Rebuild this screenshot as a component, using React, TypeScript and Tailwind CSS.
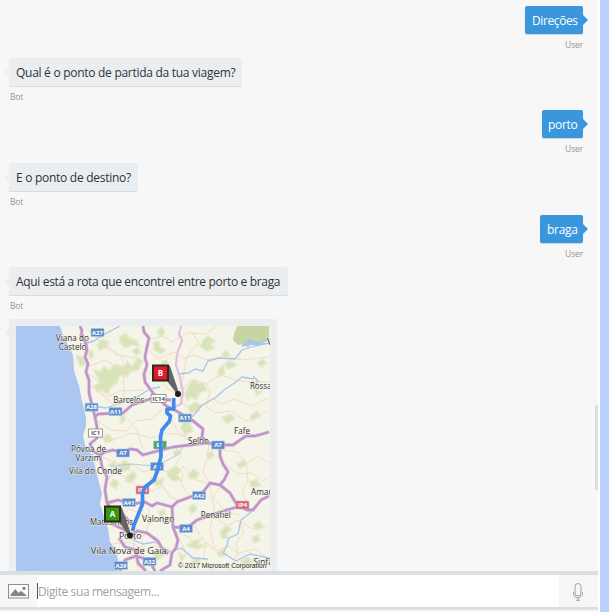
import React from 'react';

const FONT = "font-['Open_Sans','Noto_Sans',sans-serif]";

function UserMessage({ text, box, tracking }: { text: string; box: string; tracking: string }) {
  return (
    <div className="flex h-[104.4px] flex-col items-end pr-[15px]">
      <div className={`relative flex h-7 shrink-0 items-center rounded-[2px] bg-[#3a96dd] pt-[2px] shadow-[0_1px_1px_#c8d4dd] ${box}`}>
        <span className={`text-[12px] leading-7 whitespace-nowrap text-white ${tracking}`}>{text}</span>
        <span className="absolute top-[9px] -right-[5px] border-y-[5px] border-l-[5px] border-y-transparent border-l-[#3a96dd]" />
      </div>
      <div className="mt-1 h-[14px] text-[8.5px] leading-[14px] tracking-[-0.15px] text-[#969696]">User</div>
    </div>
  );
}

function BotMessage({ text, box, tracking }: { text: string; box: string; tracking: string }) {
  return (
    <div className="flex flex-col items-start pl-[9px]">
      <div className={`relative flex h-7 items-center rounded-[2px] bg-[#ebeef1] pt-[2px] pl-[7px] shadow-[0_1px_0_#d9dcdf] ${box}`}>
        <span className={`text-[12px] leading-7 whitespace-nowrap text-[#303236] ${tracking}`}>{text}</span>
        <BotTail />
      </div>
      <div className="mt-1 ml-px h-[14px] text-[8.5px] leading-[14px] tracking-[-0.15px] text-[#969696]">Bot</div>
    </div>
  );
}

function BotTail() {
  return <span className="absolute top-[10px] -left-[4px] border-y-[4px] border-r-[4px] border-y-transparent border-r-[#ebeef1]" />;
}

const highways = [
  'M80 326L82 331 81 336 86 343 87 350 85 357 88 364 86 372 89 380 89 393 92 405 95 417 97 427 97 438 90 444 94 452 100 455 102 467 107 477 105 490 107 503 112 510 123 515 132 524',
  'M143 326L144 332 149 338 147 347 145 357 147 365 144 374 145 382 153 393 165 405 180 413 192 420 203 429 202 437 207 443',
  'M95 417L98 414 123 413 132 405 150 399 171 400',
  'M100 455L105 452 113 450 122 453 130 449 137 450 143 455 150 453 173 447 207 443 220 445 233 445 240 440 246 436 255 436 269 432',
  'M220 448L220 456 223 464 228 472 224 480 220 485 210 483 203 492 190 497 177 502 172 507 165 505 157 503 152 506 145 502 132 504 118 500 107 503',
  'M220 485L230 493 237 505 247 510 253 510 261 500 269 496',
  'M237 507L217 513 197 520 187 528 173 527',
  'M172 505L173 527 178 540 176 548 172 553 170 565 160 571',
  'M112 524L123 529 130 535 138 531 147 533 158 541 163 550 168 554',
  'M119 538L125 547 136 550 138 563 146 571M120 571L125 560 136 556 149 560 155 571',
];

const minorRoads = [
  'M84 326L103 345 117 355 137 358 143 362M104 326L97 339 111 349 123 358 124 397 115 413',
  'M87 367L105 360 121 370 140 369M89 385L108 397 119 391 144 390M89 374L99 381 100 393 116 407',
  'M149 350L158 359 174 352 184 359 194 355 207 360 225 356 242 360 269 357',
  'M146 371L160 379 168 389 178 394 191 380 207 384 220 374 237 381 269 382',
  'M150 339L164 336 172 342 188 333 205 334 217 326M191 331L199 343 191 351 186 360 183 378 178 394',
  'M178 394L184 405 198 410 212 398 222 404 235 399 251 406 269 398',
  'M207 384L210 391 206 407 216 413 231 411 246 421 269 411',
  'M164 408L151 419 136 421 127 431 110 430 97 420M125 415L137 431 143 449M171 418L177 430 186 439 199 443',
  'M98 438L115 439 132 433 151 438 166 433 183 435 201 444',
  'M103 457L120 465 132 464 143 472 157 467 171 474 184 467 196 480 209 484',
  'M106 480L115 473 128 478 137 485 152 491 163 486 170 497 182 501',
  'M175 446L181 456 175 466 183 472 181 484 190 497M209 444L207 458 203 472 210 484 214 509 210 530 215 550',
  'M222 450L238 452 246 464 258 456 269 463M224 464L238 474 252 473 263 481 269 477M246 464L248 480 242 492 249 506',
  'M107 515L120 518 129 509 143 514 149 523 164 518 173 524M149 505L149 524 142 540 145 571',
  'M175 531L189 537 195 547 207 543 216 551 228 546 238 553 256 549 269 560',
  'M180 539L186 553 180 565 195 569M192 522L200 535 207 543 203 557 214 571M211 514L227 526 238 520 253 529 269 526',
  'M238 520L244 532 236 543 238 553 230 571M222 485L213 497 226 512 240 515',
  'M110 522L123 530 131 526 142 532M113 544L130 542 144 550 154 546 171 550M135 536L133 551 139 571',
];

const woods = [
  'M97 345L102 339 109 342 106 348 99 350ZM119 338L125 333 129 338 136 340 140 346 132 345 126 348 121 344ZM76 355L83 357 86 365 80 366Z',
  'M94 370L100 372 104 366 109 370 115 364 124 367 127 361 132 366 138 358 143 361 138 370 130 372 127 377 120 375 117 383 110 388 108 394 101 390 97 392 94 386 100 382Z',
  'M88 352L92 350 94 356 90 359ZM121 416L124 413 125 421 120 424ZM103 437L109 434 113 441 105 443ZM132 351L137 347 141 352 136 355Z',
  'M157 331L162 327 165 333 160 337ZM153 343L159 341 160 347 166 350 161 354 154 350ZM203 340L208 336 216 341 211 344 215 348 207 351 200 347ZM224 364L230 360 237 365 228 369Z',
  'M162 361L167 360 168 368 163 374 158 370ZM190 383L195 379 199 384 204 383 207 390 200 393 196 400 191 397 187 401 185 394Z',
  'M188 407L195 402 201 405 199 411 190 413ZM183 421L190 423 193 431 185 435 181 428ZM222 418L230 414 235 418 227 424ZM257 363L263 359 267 363 261 367Z',
  'M218 370L223 365 225 373 219 377ZM250 416L257 411 260 416 252 421ZM254 389L262 392 257 396ZM222 354L226 350 230 355 224 358Z',
  'M118 465L125 460 131 465 129 470 120 472ZM127 477L133 471 137 475 132 483 125 481ZM113 479L119 482 116 489 110 485ZM109 465L115 461 115 469Z',
  'M152 476L159 480 164 477 162 485 156 486 151 481ZM167 471L176 466 181 471 177 475 182 480 173 481 168 477ZM173 452L178 449 181 454 175 456Z',
  'M188 474L194 469 199 473 196 479 190 479ZM237 464L244 460 247 464 240 469ZM249 482L257 479 261 486 252 488ZM207 454L212 451 214 456 209 459Z',
  'M188 508L194 504 197 509 192 514ZM220 531L226 525 232 529 226 534 229 538 222 539ZM253 525L259 521 264 527 257 530Z',
  'M186 546L193 541 202 539 198 544 205 546 197 549ZM191 561L198 557 201 563 193 566ZM240 561L248 557 253 562 246 566ZM217 552L224 549 227 555 219 557Z',
  'M153 554L160 551 164 556 157 560ZM158 512L164 509 166 514 161 517ZM179 553L185 556 181 560ZM252 537L258 535 260 541 254 543Z',
];

const labels: [string, number, number, number, number][] = [
  ['Viana do', 55.8, 340.5, 33, 8.7],
  ['Castelo', 58.8, 349.5, 27.5, 8.7],
  ['Barcelos', 113.3, 403.3, 31, 8.7],
  ['Póvoa de', 71, 451.8, 35, 8.7],
  ['Varzim', 75.5, 461.2, 25.5, 8.7],
  ['Vila do Conde', 69, 474.2, 53, 8.7],
  ['Selho', 188, 443.8, 21, 8.7],
  ['Fafe', 234, 433.8, 16, 8.7],
  ['Rossas', 250, 388.8, 25, 8.7],
  ['Amarante', 251, 494.5, 38, 8.7],
  ['Valongo', 142, 522.3, 32, 8.7],
  ['Penafiel', 200.8, 517.6, 30, 8.7],
  ['Matosinhos', 90, 525, 43, 8.7],
  ['Porto', 119, 538.8, 22.5, 9.2],
  ['Vila Nova de Gaia', 90.8, 554, 76, 9.6],
  ['Sinfães', 253.5, 565, 28, 8.2],
  ['Aveiro', 19, 577.5, 26, 8.3],
  ['V', 267, 345, 6, 8.3],
];

const shields: [string, number, number, string][] = [
  ['A27', 97.5, 332.5, '#5b8dcb'],
  ['A28', 91.5, 407.2, '#5b8dcb'],
  ['A11', 115.5, 411.5, '#5b8dcb'],
  ['A11', 185, 418, '#5b8dcb'],
  ['A7', 123, 453, '#5b8dcb'],
  ['A7', 218, 445, '#5b8dcb'],
  ['A3', 157, 466.5, '#5b8dcb'],
  ['A41', 129, 502.5, '#5b8dcb'],
  ['A42', 199, 495.5, '#5b8dcb'],
  ['A4', 186, 528.5, '#5b8dcb'],
  ['A29', 121, 565.5, '#5b8dcb'],
  ['A32', 149.5, 561.5, '#5b8dcb'],
  ['E1', 160, 445, '#5aa566'],
  ['IP4', 142.5, 490, '#e0626c'],
  ['IP4', 242.5, 505, '#e0626c'],
];

const routeMarks = [
  { letter: 'B', x: 152, y: 364.5, fill: '#e0192b', dot: [178, 394], wedge: 'M168 365L170 366 179 393 177 394 167 381Z' },
  { letter: 'A', x: 104, y: 505.5, fill: '#36980c', dot: [130, 535.5], wedge: 'M120 506L122 508 131 534 129 535.5 119 522Z' },
];

function RouteMap() {
  return (
    <svg className="block h-[246px] w-[254px] overflow-hidden" viewBox="16 326 254 246">
      <rect x="16" y="326" width="254" height="246" fill="#f5f4e9" />
      <g fill="#d9e3b9" stroke="#e5ebcf" strokeWidth="1.6" strokeLinejoin="round">
        {woods.map((d) => <path key={d} d={d} />)}
      </g>
      <path d="M237 326L234 334 233 340 238 345 243 344 248 348 252 343 260 344 269 339V326Z" fill="#c5d5a4" />
      <path
        d="M16 326H60L64 338 70 349 73 355 74 371 79 386 82 401 86 418 86 426 83 435 85 445 92 455 96 470 99 483 102 493 100 504 104 517 108 528 110 542 116 550 118 560 118 572H16Z"
        fill="#abc6f0"
      />
      <g fill="none" stroke="#f3dcc0" strokeWidth="1">
        {minorRoads.map((d) => <path key={d} d={d} />)}
      </g>
      <g fill="none" stroke="#a9c5ec" strokeWidth="1.3" strokeLinejoin="round">
        <path d="M83 344L94 341 105 334 120 326M92 406L106 408 123 402 137 397 150 389 160 387M178 374L188 373 195 369 203 371 208 361 219 358 235 359 242 350 255 346 269 343" />
        <path d="M181 419L193 416 202 405 215 398 224 390 233 384 242 377 254 379M253 376L258 381 254 388" />
        <path d="M110 466L133 464 153 466 166 461 177 455 184 446" strokeWidth=".9" />
        <path d="M131 539L143 544 155 542 170 552 181 548 193 558 208 559M223 553L227 545 229 538 238 534 241 520 250 513 258 503 263 499M223 553L236 561 250 554 269 558" />
        <path d="M242 346L249 340 260 343 269 339 259 345 249 344Z" fill="#a9c5ec" />
      </g>
      <path d="M181 326L179 334 182 340 177 354 176 365 180 378 183 392 181 404 174 407" fill="none" stroke="#e2bfe0" strokeWidth="2.2" />
      <g fill="none" strokeLinejoin="round">
        {highways.map((d) => <path key={d} d={d} stroke="#e0c8e0" strokeWidth="3.6" />)}
        {highways.map((d) => <path key={d} d={d} stroke="#bf93c6" strokeWidth="2.3" />)}
      </g>
      <g fill="#303030" stroke="#f7f5ed" strokeWidth=".8" paintOrder="stroke">
        {labels.map(([name, x, y, width, size]) => (
          <text key={name} x={x} y={y} textLength={width} lengthAdjust="spacingAndGlyphs" fontSize={size}>{name}</text>
        ))}
      </g>
      <g fontSize="6" fontWeight="700" textAnchor="middle">
        {shields.map(([name, x, y, fill]) => (
          <g key={`${name}-${x}`}>
            <rect x={x - 6.5} y={y - 4} width="13" height="8" rx=".5" fill={fill} stroke="#a9c3e3" strokeWidth=".6" />
            <text x={x} y={y + 2.2} fill="white">{name}</text>
          </g>
        ))}
        {[['IC1', 95.5, 433, 14], ['IC14', 158.5, 398.5, 15]].map(([name, x, y, w]) => (
          <g key={name}>
            <rect x={Number(x) - Number(w) / 2} y={Number(y) - 4} width={w} height="8" fill="#fff" stroke="#858585" strokeWidth=".8" />
            <text x={x} y={Number(y) + 2.2} fill="#555">{name}</text>
          </g>
        ))}
      </g>
      <path
        d="M173.7 398V409H167L167 413 170.5 416 169.5 421 162 430 160.5 437 161 456 158 469 154 480 145 487 142.5 493 142.5 504 134 525 132.5 531"
        fill="none" stroke="#3f8aec" strokeWidth="3.7" strokeLinejoin="round"
      />
      {routeMarks.map((m) => (
        <g key={m.letter}>
          <path d={m.wedge} fill="#646464" />
          <circle cx={m.dot[0]} cy={m.dot[1]} r="3" fill="#1c1c1c" />
          <rect x={m.x + 1} y={m.y + 1} width="15" height="15" fill={m.fill} stroke="#30281f" strokeWidth="2" />
          <text x={m.x + 8.5} y={m.y + 11.4} fill="#fff" fontSize="8" fontWeight="700" textAnchor="middle">{m.letter}</text>
        </g>
      ))}
      <text x="178" y="568.3" fontSize="6.8" fill="#282828" stroke="#f5f3ea" strokeWidth=".8" paintOrder="stroke" textLength="88.5" lengthAdjust="spacingAndGlyphs" className="font-['Liberation_Sans',sans-serif]">© 2017 Microsoft Corporation</text>
    </svg>
  );
}

function Composer() {
  return (
    <div className="flex h-[39px] shrink-0 border-t-4 border-b-3 border-[#dadfe3] bg-white">
      <button aria-label="Imagem" className="flex w-[37px] items-center bg-[#f6f6f6] pl-2">
        <svg width="21" height="15" viewBox="0 0 21 15">
          <rect x=".5" y=".5" width="20" height="13.5" fill="#fafafa" stroke="#8e8e8e" />
          <path d="M2.5 12V10.8L7.2 5 10.7 9 13 6.8 18.5 11.5V12Z" fill="#858585" />
          <circle cx="16" cy="4.3" r="1.6" fill="#858585" />
        </svg>
      </button>
      <div className="flex flex-1 items-center">
        <span className="h-[16px] w-px bg-[#555]" />
        <span className="pt-[2px] text-[12px] leading-7 tracking-[-0.4px] whitespace-nowrap text-[#a2a2a2]">Digite sua mensagem...</span>
      </div>
      <button aria-label="Microfone" className="flex w-[39px] items-center justify-center bg-[#f6f6f6] pt-[2px]">
        <svg className="-ml-px" width="10" height="18" viewBox="0 0 10 18" fill="none" stroke="#a2a2a2">
          <rect x="2" y=".5" width="6" height="12.5" rx="3" />
          <path d="M.5 9V10.5C.5 16.2 9.5 16.2 9.5 10.5V9M5 15V17M3 17.3H7" />
        </svg>
      </button>
    </div>
  );
}

export default function App() {
  return (
    <div className={`flex h-[612px] w-[609px] overflow-hidden bg-[#bad1fb] ${FONT}`}>
      <div className="flex h-full w-[600px] flex-col border-r-2 border-white bg-[#f7f7f7]">
        <main className="flex h-[571px] shrink-0 overflow-hidden">
          <div className="flex w-[300px] flex-col gap-[58.5px] pt-[58px]">
            <BotMessage text="Qual é o ponto de partida da tua viagem?" box="w-[233px]" tracking="tracking-[-0.28px]" />
            <BotMessage text="E o ponto de destino?" box="w-[129px]" tracking="tracking-[-0.28px]" />
            <div>
              <BotMessage text="Aqui está a rota que encontrei entre porto e braga" box="w-[279px]" tracking="tracking-[-0.34px]" />
              <div className="relative mt-[6px] ml-[9px] h-[260px] w-[268px] rounded-[2px] bg-[#ebeef1] px-[7px] pt-[7px]">
                <BotTail />
                <RouteMap />
              </div>
            </div>
          </div>
          <div className="flex-1 pt-[6px]">
            <UserMessage text="Direções" box="w-[58px] pl-[7px]" tracking="tracking-[-0.4px]" />
            <UserMessage text="porto" box="w-[41px] pl-[6px]" tracking="tracking-[-0.3px]" />
            <UserMessage text="braga" box="w-[43px] pl-[7px]" tracking="tracking-[-0.3px]" />
          </div>
          <div className="-ml-[3px] w-[3px] pt-[405px]">
            <div className="h-[85px] bg-[#dadfe3]" />
          </div>
        </main>
        <Composer />
      </div>
    </div>
  );
}
